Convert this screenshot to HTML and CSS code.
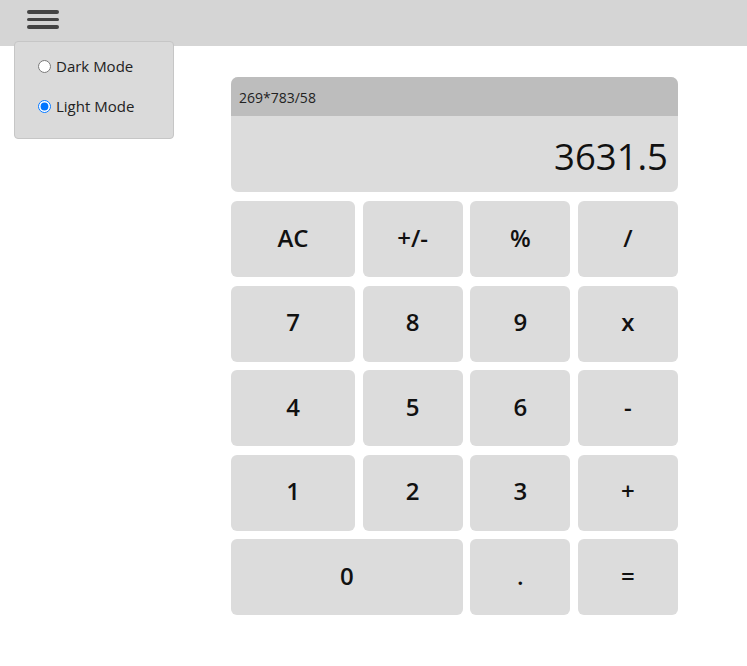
FILE: index.html
```html
<!DOCTYPE html>
<html>
<head>
<meta charset="utf-8">
<link rel="stylesheet" href="styles.css">
</head>
<body>
<header class="topbar">
  <button class="hamburger" aria-label="menu">
    <span></span><span></span><span></span>
  </button>
  <div class="menu">
    <label class="opt"><input type="radio" name="mode"> Dark Mode</label>
    <label class="opt"><input type="radio" name="mode" checked> Light Mode</label>
  </div>
</header>
<main class="main">
  <div class="calc">
    <div class="display">
      <div class="expr">269*783/58</div>
      <div class="result">3631.5</div>
    </div>
    <div class="keys">
      <button class="key">AC</button>
      <button class="key">+/-</button>
      <button class="key">%</button>
      <button class="key">/</button>
      <button class="key">7</button>
      <button class="key">8</button>
      <button class="key">9</button>
      <button class="key">x</button>
      <button class="key">4</button>
      <button class="key">5</button>
      <button class="key">6</button>
      <button class="key">-</button>
      <button class="key">1</button>
      <button class="key">2</button>
      <button class="key">3</button>
      <button class="key">+</button>
      <button class="key zero">0</button>
      <button class="key">.</button>
      <button class="key">=</button>
    </div>
  </div>
</main>
</body>
</html>
```

FILE: styles.css
```css
* { box-sizing: border-box; }
html, body {
  margin: 0;
  padding: 0;
  background: #ffffff;
  font-family: "Open Sans", "Noto Sans", sans-serif;
  color: #111;
}
.topbar {
  position: relative;
  height: 46px;
  background: #d5d5d5;
  padding: 10px 0 0 27px;
}
.hamburger {
  display: flex;
  flex-direction: column;
  gap: 4px;
  width: 32px;
  padding: 0;
  border: 0;
  background: transparent;
}
.hamburger span {
  display: block;
  width: 32px;
  height: 3.5px;
  border-radius: 2px;
  background: #444;
}
.menu {
  position: absolute;
  left: 14px;
  top: 41px;
  width: 160px;
  height: 98px;
  background: #dadada;
  border: 1px solid #c6c6c6;
  border-radius: 4px;
  padding: 13px 0 0 23px;
  display: flex;
  flex-direction: column;
  gap: 18px;
  z-index: 2;
}
.opt {
  display: flex;
  align-items: center;
  font-size: 15px;
  color: #222;
  line-height: 22px;
  height: 22px;
}
.opt input {
  margin: 0 5px 0 0;
  width: 13px;
  height: 13px;
}
.main {
  display: flex;
  padding: 31px 0 0 231px;
}
.calc {
  width: 447px;
  display: flex;
  flex-direction: column;
  gap: 9px;
}
.display {
  border-radius: 7px;
  overflow: hidden;
  background: #dcdcdc;
}
.expr {
  height: 39px;
  background: #bdbdbd;
  padding: 0 8px;
  font-size: 14px;
  line-height: 41px;
  color: #222;
}
.result {
  height: 76px;
  text-align: right;
  padding: 0 10px;
  font-size: 36.5px;
  line-height: 80px;
  color: #111;
}
.keys {
  display: grid;
  grid-template-columns: 124px 100px 100px 100px;
  grid-auto-rows: 76px;
  column-gap: 7.67px;
  row-gap: 8.5px;
}
.key {
  border: 0;
  border-radius: 6px;
  background: #dcdcdc;
  font-family: "Open Sans", "Noto Sans", sans-serif;
  font-size: 24px;
  font-weight: 600;
  color: #111;
  padding: 0 0 4px 0;
}
.zero { grid-column: span 2; }
```
